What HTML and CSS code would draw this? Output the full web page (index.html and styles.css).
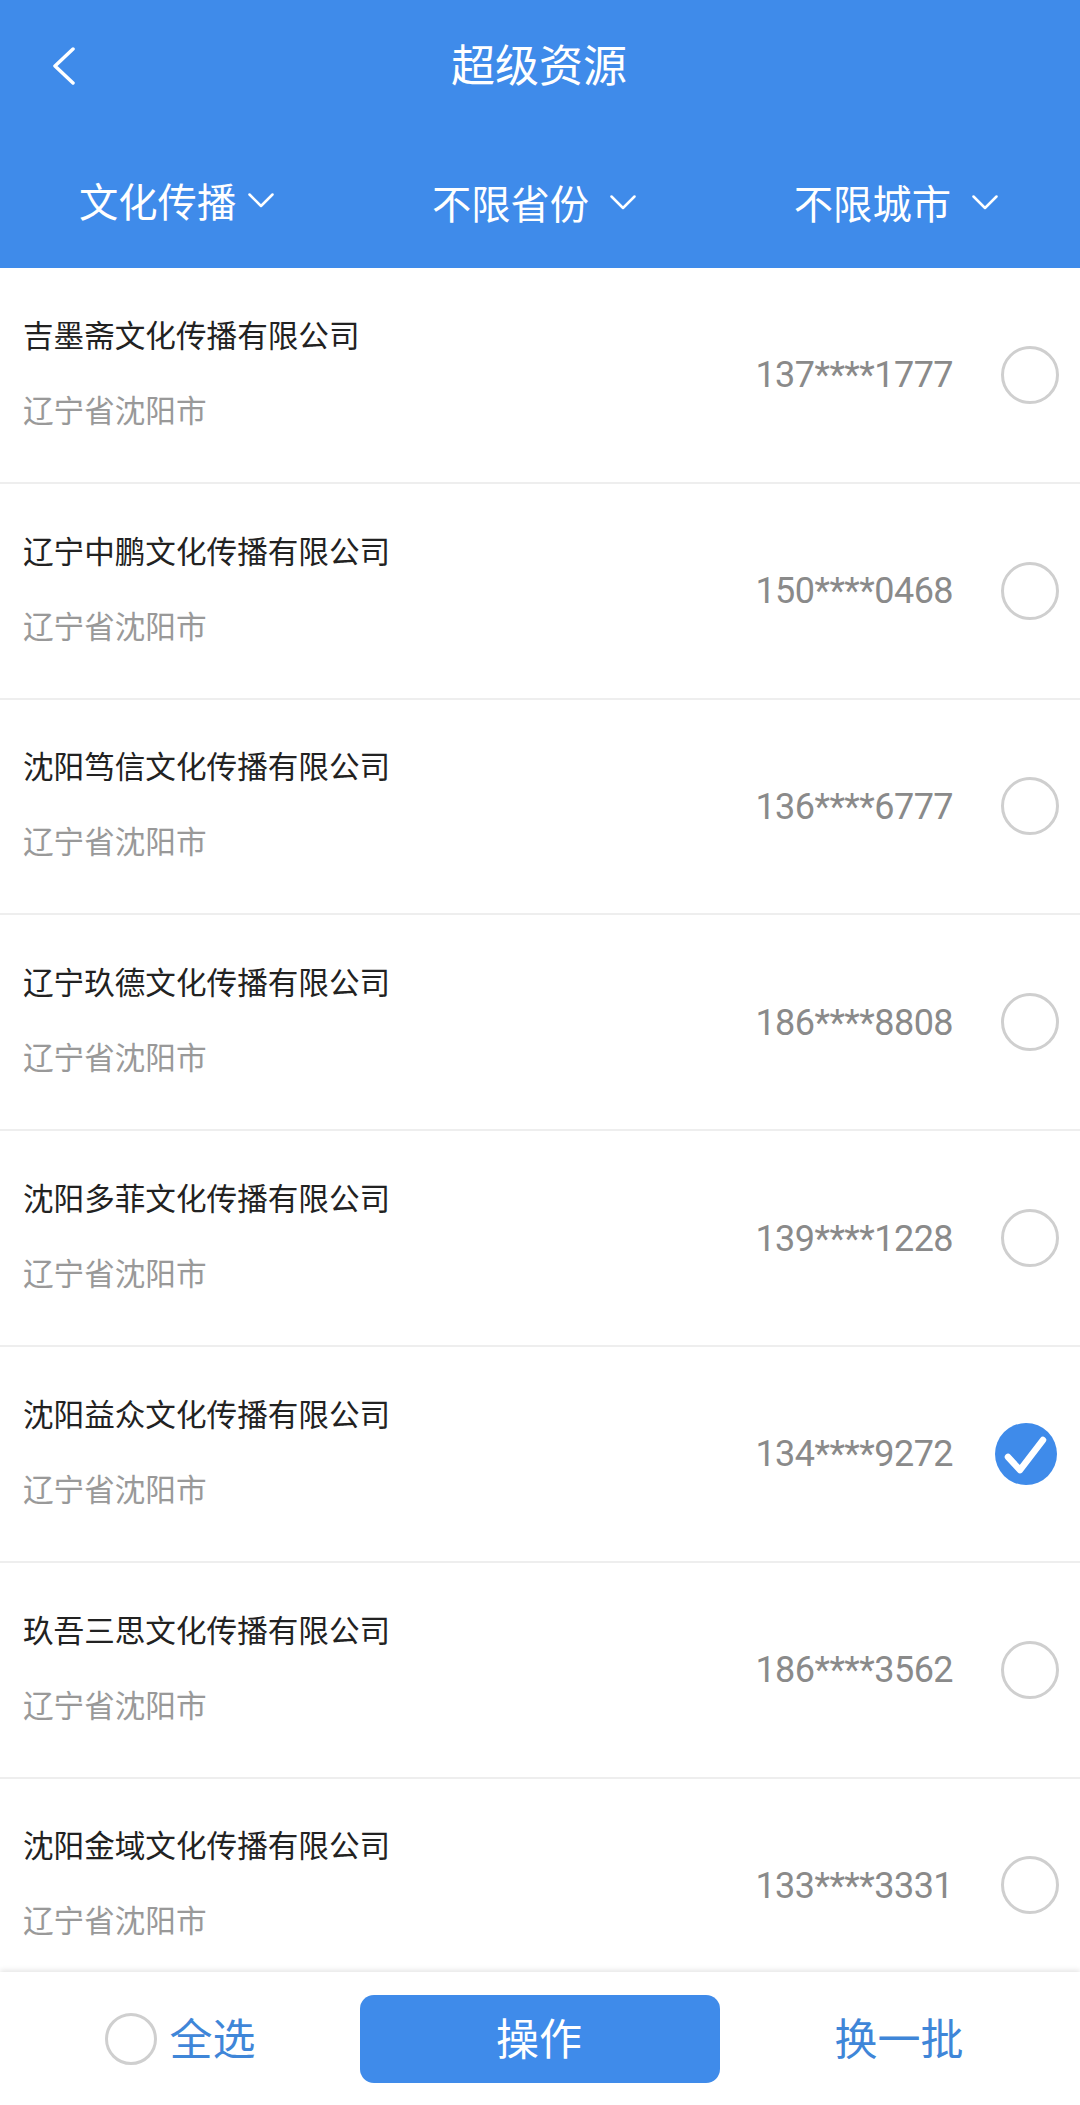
FILE: index.html
```html
<!DOCTYPE html>
<html lang="zh-CN">
<head>
<meta charset="utf-8">
<title>超级资源</title>
<link rel="stylesheet" href="styles.css">
</head>
<body>
<div class="page">
  <header class="header">
    <div class="topbar">
      <svg class="back" width="24" height="38" viewBox="0 0 24 38"><path d="M21 2 L3 19 L21 36"/></svg>
      <h1 class="title">超级资源</h1>
    </div>
    <div class="filters">
      <div class="filter filter-first"><span>文化传播</span><svg class="chev" width="26" height="15" viewBox="0 0 26 15"><path d="M1.5 1.5 L13 13 L24.5 1.5"/></svg></div>
      <div class="filter"><span>不限省份</span><svg class="chev" width="26" height="15" viewBox="0 0 26 15"><path d="M1.5 1.5 L13 13 L24.5 1.5"/></svg></div>
      <div class="filter"><span>不限城市</span><svg class="chev" width="26" height="15" viewBox="0 0 26 15"><path d="M1.5 1.5 L13 13 L24.5 1.5"/></svg></div>
    </div>
  </header>
  <main class="list">
    <div class="row"><div class="info"><div class="name">吉墨斋文化传播有限公司</div><div class="addr">辽宁省沈阳市</div></div><div class="phone">137****1777</div><div class="slot"><span class="radio"></span></div></div>
    <div class="row"><div class="info"><div class="name">辽宁中鹏文化传播有限公司</div><div class="addr">辽宁省沈阳市</div></div><div class="phone">150****0468</div><div class="slot"><span class="radio"></span></div></div>
    <div class="row"><div class="info"><div class="name">沈阳笃信文化传播有限公司</div><div class="addr">辽宁省沈阳市</div></div><div class="phone">136****6777</div><div class="slot"><span class="radio"></span></div></div>
    <div class="row"><div class="info"><div class="name">辽宁玖德文化传播有限公司</div><div class="addr">辽宁省沈阳市</div></div><div class="phone">186****8808</div><div class="slot"><span class="radio"></span></div></div>
    <div class="row"><div class="info"><div class="name">沈阳多菲文化传播有限公司</div><div class="addr">辽宁省沈阳市</div></div><div class="phone">139****1228</div><div class="slot"><span class="radio"></span></div></div>
    <div class="row"><div class="info"><div class="name">沈阳益众文化传播有限公司</div><div class="addr">辽宁省沈阳市</div></div><div class="phone">134****9272</div><div class="slot"><svg class="checked" width="62" height="64" viewBox="0 0 62 64"><circle cx="31" cy="32" r="31"/><path d="M13 35 L25 48 L48 18"/></svg></div></div>
    <div class="row"><div class="info"><div class="name">玖吾三思文化传播有限公司</div><div class="addr">辽宁省沈阳市</div></div><div class="phone">186****3562</div><div class="slot"><span class="radio"></span></div></div>
    <div class="row"><div class="info"><div class="name">沈阳金域文化传播有限公司</div><div class="addr">辽宁省沈阳市</div></div><div class="phone">133****3331</div><div class="slot"><span class="radio"></span></div></div>
  </main>
  <footer class="footer">
    <div class="select-all"><span class="radio radio-small"></span><span class="link">全选</span></div>
    <button class="action">操作</button>
    <div class="swap"><span class="link">换一批</span></div>
  </footer>
</div>
</body>
</html>
```
FILE: styles.css
```css
* { box-sizing: border-box; }
html, body { margin: 0; padding: 0; }
body {
  background: #fff;
  font-family: "Noto Sans CJK SC", "Noto Sans", sans-serif;
}
.page {
  width: 1080px;
  height: 2105px;
  display: flex;
  flex-direction: column;
  overflow: hidden;
}
.header {
  height: 268px;
  flex: none;
  background: #3f8bea;
  color: #fff;
}
.topbar {
  height: 130px;
  padding: 0 2px 4px 0;
  display: flex;
  align-items: center;
  justify-content: center;
  position: relative;
}
.back {
  position: absolute;
  left: 52px;
  top: 47px;
  fill: none;
  stroke: #fff;
  stroke-width: 3.5;
  stroke-linecap: round;
  stroke-linejoin: round;
}
.title {
  margin: 0;
  font-size: 44px;
  font-weight: 400;
  line-height: 60px;
}
.filters {
  display: flex;
  justify-content: space-between;
  padding: 0 82px 0 79px;
  height: 144px;
  align-items: center;
}
.filter {
  display: flex;
  align-items: center;
  gap: 21px;
  font-size: 39.3px;
  line-height: 54px;
}
.filter-first {
  gap: 12px;
  padding-bottom: 4px;
}
.chev {
  fill: none;
  stroke: #fff;
  stroke-width: 2.5;
  stroke-linecap: round;
  stroke-linejoin: round;
}
.list {
  flex: 1;
  min-height: 0;
  overflow: hidden;
}
.row {
  height: 215.8px;
  display: flex;
  align-items: center;
  padding: 0 21px 0 23px;
  border-bottom: 2px solid #eeeeee;
}
.info {
  flex: 1;
  min-width: 0;
  padding-bottom: 7px;
}
.name {
  font-size: 30.6px;
  line-height: 44px;
  color: #222;
}
.addr {
  font-size: 30.6px;
  line-height: 44px;
  margin-top: 31px;
  color: #999;
}
.phone {
  font-family: Roboto, "Liberation Sans", sans-serif;
  font-size: 36px;
  letter-spacing: -0.55px;
  color: #8a8a8a;
  margin: 1px 42px 0 0;
}
.slot {
  width: 64px;
  display: flex;
  justify-content: flex-end;
  align-items: center;
}
.radio {
  display: block;
  width: 58px;
  height: 58px;
  border-radius: 50%;
  border: 3px solid #cfcfcf;
  flex: none;
}
.radio-small {
  width: 52px;
  height: 52px;
}
.checked {
  display: block;
  margin-right: 2px;
  fill: #3f8bea;
  stroke: none;
}
.checked path {
  fill: none;
  stroke: #fff;
  stroke-width: 6.5;
  stroke-linecap: round;
  stroke-linejoin: round;
}
.footer {
  height: 133px;
  flex: none;
  background: #fff;
  box-shadow: 0 -2px 5px rgba(0, 0, 0, 0.1);
  display: grid;
  grid-template-columns: 360px 360px 360px;
  align-items: center;
  position: relative;
}
.select-all {
  display: flex;
  align-items: center;
  justify-content: center;
  gap: 13px;
}
.swap {
  display: flex;
  justify-content: center;
  padding-right: 2px;
}
.link {
  font-size: 43px;
  line-height: 60px;
  padding-bottom: 6px;
  color: #3f86d8;
}
.action {
  height: 88px;
  width: 360px;
  border: none;
  border-radius: 14px;
  background: #3f8bea;
  color: #fff;
  font-family: inherit;
  font-size: 43px;
  padding: 0 2px 6px 0;
}
```
